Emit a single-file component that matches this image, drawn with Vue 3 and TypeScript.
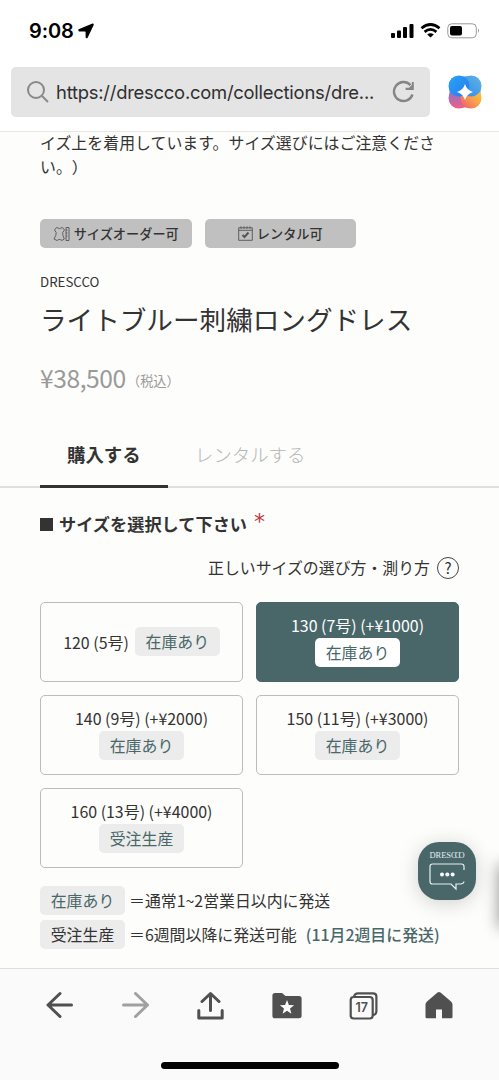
<script setup lang="ts">
interface SizeOption {
  label: string
  stock: string
  inline?: boolean
}

const sizes: SizeOption[] = [
  { label: '120 (5号)', stock: '在庫あり', inline: true },
  { label: '130 (7号) (+¥1000)', stock: '在庫あり' },
  { label: '140 (9号) (+¥2000)', stock: '在庫あり' },
  { label: '150 (11号) (+¥3000)', stock: '在庫あり' },
  { label: '160 (13号) (+¥4000)', stock: '受注生産' },
]
const selected = 1
</script>

<template>
  <div class="screen">
    <header class="top">
      <div class="status">
        <span class="time">9:08</span>
        <svg class="loc" width="16" height="16" viewBox="0 0 16 16"><path d="M14.500.5 0.600 6.300Q-.2 7.800 1 8.400H7Q7.600 8.400 7.600 9V14.600Q8.300 15.900 9.500 15L15.700 1.900Q15.900.2 14.500.5Z" /></svg>
        <svg class="signals" width="90" height="16" viewBox="0 0 90 16">
          <rect x="1" y="10" width="4" height="5" rx="1" />
          <rect x="7" y="7.500" width="4" height="7.500" rx="1" />
          <rect x="13" y="4" width="4" height="11" rx="1" />
          <rect x="19.500" y="1" width="4" height="14" rx="1" />
          <g fill="none" stroke="#000" stroke-width="2.700">
            <path d="M31.500 5.300Q40.500-2.300 49.500 5.300" />
            <path d="M34.600 8.900Q40.500 4 46.400 8.900" />
          </g>
          <path d="M37.200 11.600Q40.500 9 43.800 11.600L40.500 14.600Z" />
          <rect x="57.800" y=".8" width="28.500" height="14" rx="4" fill="none" stroke="#999" />
          <rect x="60" y="3" width="12" height="9.600" rx="2" />
          <path d="M88 5.300Q90 7.700 88 10Z" fill="#999" />
        </svg>
      </div>
      <div class="address-row">
        <div class="address">
          <svg class="search" width="24" height="24" viewBox="0 0 24 24" fill="none" stroke="#898989" stroke-width="2"><circle cx="10" cy="10" r="8" /><path d="m16 16 6 6" /></svg>
          <span class="url">https://drescco.com/collections/dre...</span>
          <svg class="reload" width="24" height="24" viewBox="0 0 24 24"><path d="M18.500 5.100A9.500 9.500 0 1 0 20.500 14.500" fill="none" stroke="#858585" stroke-width="2.400" /><path d="M21.800 2V9.900H13.600V7.800H17L19.800 5V2Z" fill="#858585" /></svg>
        </div>
        <svg class="clover" width="34" height="34" viewBox="0 0 34 34">
          <defs>
            <linearGradient id="petalA" x1="0" y1="0" x2="1" y2="1"><stop stop-color="#28a5f5" /><stop offset="1" stop-color="#2878ef" /></linearGradient>
            <linearGradient id="petalB" x1="0" y1="1" x2="1" y2="0"><stop stop-color="#2588ef" /><stop offset="1" stop-color="#65b5e3" /></linearGradient>
            <linearGradient id="petalC" x1="0" y1="0" x2="0" y2="1"><stop stop-color="#6d7cda" /><stop offset="1" stop-color="#f45d82" /></linearGradient>
            <linearGradient id="petalD" x1="1" y1="0" x2="0" y2="1"><stop stop-color="#f7cf35" /><stop offset=".48" stop-color="#f7a34b" /><stop offset="1" stop-color="#f25378" /></linearGradient>
            <linearGradient id="bodyFill" x1="0" y1="0" x2="0" y2="1"><stop offset=".3" stop-color="#2f8bee" /><stop offset=".55" stop-color="#8d8ccb" /><stop offset=".8" stop-color="#f1617c" /></linearGradient>
          </defs>
          <rect x="1.500" y="1.500" width="31" height="31" rx="8" fill="url(#bodyFill)" />
          <circle cx="11" cy="23" r="10.500" fill="url(#petalC)" />
          <circle cx="23" cy="23" r="10.500" fill="url(#petalD)" />
          <circle cx="23" cy="11" r="10.500" fill="url(#petalB)" />
          <circle cx="11" cy="11" r="10.500" fill="url(#petalA)" />
          <path d="M17 9Q18.800 15.200 25 17Q18.800 18.800 17 25Q15.200 18.800 9 17Q15.200 15.200 17 9Z" fill="#fff" />
        </svg>
      </div>
    </header>

    <main class="page">
      <p class="note">イズ上を着用しています。サイズ選びにはご注意くださ<br />い。）</p>
      <div class="badges">
        <span class="badge">
          <svg width="17" height="16" viewBox="0 0 17 16" fill="none" stroke="#555" stroke-width=".9"><path d="M3.500 1.500 5 2Q6.500 3.300 8 2L9.500 1.500 11.500 4 9.700 6.500Q9.300 9 11.300 13L9 14.500 7.500 13.600H5.500L4 14.500 1 13Q3.500 9 3.200 6.500L1.500 4Z" /><path d="M13 1.500h3v13h-3zM13 4h1.500M13 7h1.500M13 10h1.500" /></svg>
          サイズオーダー可
        </span>
        <span class="badge rental">
          <svg width="15" height="15" viewBox="0 0 15 15" fill="none" stroke="#555"><path d="M.7 1.800h13.600v12.500H.7zM.7 4.300h13.600M3 .3v2.500M6 .3v2.500M9 .3v2.500M12 .3v2.500" stroke-width=".9" /><path d="m4.500 9 2 2 4-4.500" stroke-width="2" /></svg>
          レンタル可
        </span>
      </div>
      <div class="brand">DRESCCO</div>
      <h1 class="title">ライトブルー刺繍ロングドレス</h1>
      <div class="price"><span class="amount">¥38,500</span><span class="tax">（税込）</span></div>

      <nav class="tabs">
        <span class="tab active">購入する</span>
        <span class="tab">レンタルする</span>
      </nav>

      <h2 class="heading"><i class="square"></i><span>サイズを選択して下さい</span>
        <b class="required">*</b>
      </h2>
      <div class="guide">
        <span>正しいサイズの選び方・測り方</span>
        <span class="question">?</span>
      </div>

      <div class="sizes">
        <div v-for="(size, i) in sizes" :key="size.label" class="size" :class="{ selected: i === selected, inline: size.inline }">
          <span class="label">{{ size.label }}</span>
          <span class="chip">{{ size.stock }}</span>
        </div>
      </div>

      <div class="legend">
        <div class="legend-row"><span class="chip">在庫あり</span><span class="meaning">＝通常1~2営業日以内に発送</span></div>
        <div class="legend-row"><span class="chip dark">受注生産</span><span class="meaning">＝6週間以降に発送可能</span><span class="date">(11月2週目に発送)</span></div>
      </div>

      <div class="edge-shadow"></div>
      <div class="chat">
        <span class="chat-brand">DRES<span class="tight">CC</span>O</span>
        <svg width="36" height="28" viewBox="0 0 36 28" fill="none" stroke="#e8f0ef" stroke-width="1.200"><path d="M35 7V3.500Q35 1 32.500 1H3.500Q1 1 1 3.500V18.500Q1 21 3.500 21H22L27 26V21H31.500Q34.500 21 35 18.500" /><g fill="#fff" stroke="none"><circle cx="13" cy="11.500" r="2" /><circle cx="18.300" cy="11.500" r="2" /><circle cx="23.600" cy="11.500" r="2" /></g></svg>
      </div>
    </main>

    <footer class="bottom">
      <div class="tools">
        <svg viewBox="0 0 30 30" fill="none" stroke="#505050" stroke-width="3" stroke-linecap="round" stroke-linejoin="round"><path d="M26.500 15H3M15 3.500 3 15l12 11.500" /></svg>
        <svg viewBox="0 0 30 30" fill="none" stroke="#a0a0a0" stroke-width="3" stroke-linecap="round" stroke-linejoin="round"><path d="M2.500 15h24M14.500 3.500 26.500 15l-12 11.500" /></svg>
        <svg viewBox="1.500 0 30 30" fill="none" stroke="#505050" stroke-width="3" stroke-linecap="round" stroke-linejoin="round"><path d="M15 20.500V3.500M6.500 11.500 15 3.500l8.500 8M3.300 20.500v7.500h23.400v-7.500" /></svg>
        <svg viewBox="0 0 30 30" fill="#505050"><path d="M3 3h7l3.500 3H27Q29.600 6 29.600 8.500V26Q29.600 28.300 27 28.300H3Q.4 28.300.4 26V5.500Q.4 3 3 3Z" /><path fill="#fff" d="m15 10 1.900 5.100 5.200.2-4.100 3.300 1.400 5.200-4.400-3-4.400 3 1.400-5.200-4.100-3.300 5.200-.2Z" /></svg>
        <svg viewBox="-.500 0 30 30" fill="none" stroke="#505050" stroke-width="2.200"><path d="M5.500 7Q6 3.300 9.500 3.300H24.500Q27.900 3.300 27.900 6.500V21Q27.900 25 24 25" /><rect x="2.200" y="7" width="22" height="21.500" rx="3" fill="#fbfafa" /><text x="13.200" y="22.300" text-anchor="middle" class="tab-count">17</text></svg>
        <svg viewBox="0 0 30 30" fill="#505050"><path d="M13.500 2.600Q15 1.400 16.500 2.600L27 11.500Q28.500 12.800 28.500 14.500V27Q28.500 28.300 27.200 28.300H18V19.500H12V28.300H2.800Q1.500 28.300 1.500 27V14.500Q1.500 12.800 3 11.500Z" /></svg>
      </div>
      <div class="home-indicator"></div>
    </footer>
  </div>
</template>

<style>
body { margin: 0; }
</style>

<style scoped>
* { box-sizing: border-box; }
.screen { width: 499px; height: 1080px; display: flex; flex-direction: column; overflow: hidden; background: #fdfdfb; color: #333; font-family: "Noto Sans CJK JP", "Noto Sans", sans-serif; font-size: 15.9px; text-spacing-trim: space-all; }
.top { height: 132px; flex: none; background: #fff; border-bottom: 1px solid #e6e6e6; }
.status { height: 67px; padding: 20px 16px 0 29px; display: flex; align-items: flex-start; }
.time { font: 600 20px/22px Inter, sans-serif; color: #000; width: 45px; letter-spacing: -.1px; }
.loc { margin: 3px 0 0 4px; }
.signals { margin: 3px 3px 0 auto; }
.address-row { display: flex; align-items: center; padding-left: 11px; }
.address { width: 419px; height: 50px; border-radius: 5px; background: #e4e4e4; display: flex; align-items: center; padding: 0 15px; }
.search { margin-right: 6px; flex: none; }
.url { font: 18.400px/24px Inter, sans-serif; color: #303030; white-space: nowrap; width: 324px; flex: none; letter-spacing: -.23px; }
.reload { margin-left: 12px; flex: none; }
.clover { margin-left: 18px; }
.page { position: relative; height: 836px; flex: none; }
.note { margin: -1px 40px 0; line-height: 24px; height: 88px; white-space: nowrap; letter-spacing: .03px; }
.badges { display: flex; gap: 13px; padding-left: 40px; height: 29px; }
.badge { width: 151.500px; border-radius: 5px; background: #c0c0c0; display: flex; align-items: center; justify-content: center; gap: 4px; font-size: 13.200px; font-weight: 500; line-height: 29px; white-space: nowrap; }
.brand { margin: 22px 40px 0; font-size: 13.300px; line-height: 24px; }
.title { margin: 7px 40px 0; font-weight: 400; font-size: 26.600px; line-height: 36px; white-space: nowrap; }
.price { margin: 20px 40px 0; height: 40px; line-height: 40px; font-size: 24.600px; color: #9a9a9a; display: flex; white-space: nowrap; }
.amount { width: 87px; letter-spacing: -.42px; }
.tax { font-size: 13.200px; line-height: 48px; }
.tabs { margin-top: 24px; height: 67px; border-bottom: 2px solid #e0e0df; padding-left: 40px; display: flex; font-size: 18.400px; color: #c1c1c1; }
.tab { height: 67px; line-height: 67px; padding: 0 27px; }
.tab:not(.active) { font-weight: 300; color: #b5b5b5; }
.tab.active { font-weight: 700; color: #333; width: 128px; border-bottom: 3px solid #333; }
.heading { margin: 22px 40px 0; height: 28px; font-size: 17.200px; line-height: 28px; display: flex; align-items: center; }
.square { width: 13px; height: 13px; margin-right: 6px; background: #333; }
.required { color: #bd3538; font: 400 22px/28px "DejaVu Sans", sans-serif; margin: 0 0 5px 7px; }
.guide { height: 59px; margin: 0 40px 5px 0; display: flex; align-items: center; justify-content: flex-end; gap: 7px; }
.question { width: 22px; height: 22px; border: 1.500px solid #444; border-radius: 50%; font-size: 15px; line-height: 19px; text-align: center; }
.sizes { display: grid; grid-template-columns: 203px 203px; grid-auto-rows: 80px; gap: 13px; padding-left: 40px; }
.size { border: 1px solid #bbbdbd; border-radius: 5px; display: flex; flex-direction: column; align-items: center; padding-top: 11px; }
.label { height: 24px; line-height: 22px; white-space: nowrap; font-size: 15.950px; }
.chip { flex: none; width: 85px; height: 29px; border-radius: 5px; background: #ebeceb; color: #496769; line-height: 29px; text-align: center; }
.size.inline { flex-direction: row; padding: 0 0 1px; justify-content: center; gap: 6px; }
.inline .label { line-height: 25px; }
.size.selected { background: #496769; border-color: #496769; color: #fff; }
.selected .chip { background: #fff; }
.legend { padding: 18px 40px 0; display: flex; flex-direction: column; gap: 5px; white-space: nowrap; }
.legend-row { display: flex; line-height: 30px; height: 29px; }
.legend .chip { line-height: 30px; }
.meaning { margin-left: 4px; }
.date { margin-left: 9px; color: #496769; font-weight: 500; }
.chip.dark { color: #333; }
.chat { position: absolute; left: 418px; top: 710px; width: 58px; height: 58px; border-radius: 21px; background: #496769; box-shadow: 0 3px 20px rgba(0, 0, 0, .18); display: flex; flex-direction: column; align-items: center; padding-top: 8px; color: #e5eeee; }
.chat-brand { font: 8.500px/10px "Liberation Serif", serif; height: 13px; letter-spacing: -.05px; }
.tight { letter-spacing: -2px; }
.edge-shadow { position: absolute; left: 501px; top: 735px; width: 20px; height: 58px; box-shadow: 0 0 15px 3px rgba(0, 0, 0, .38); }
.bottom { height: 112px; flex: none; border-top: 1px solid #dedede; background: #fbfafa; position: relative; }
.tools { display: flex; justify-content: space-between; padding: 21px 45px 0; }
.tools svg { width: 30px; height: 30px; }
.tab-count { font: 600 12.500px Inter, sans-serif; fill: #505050; stroke: none; }
.home-indicator { width: 178px; height: 7px; border-radius: 4px; margin: 42px auto 0; background: #000; }
</style>
